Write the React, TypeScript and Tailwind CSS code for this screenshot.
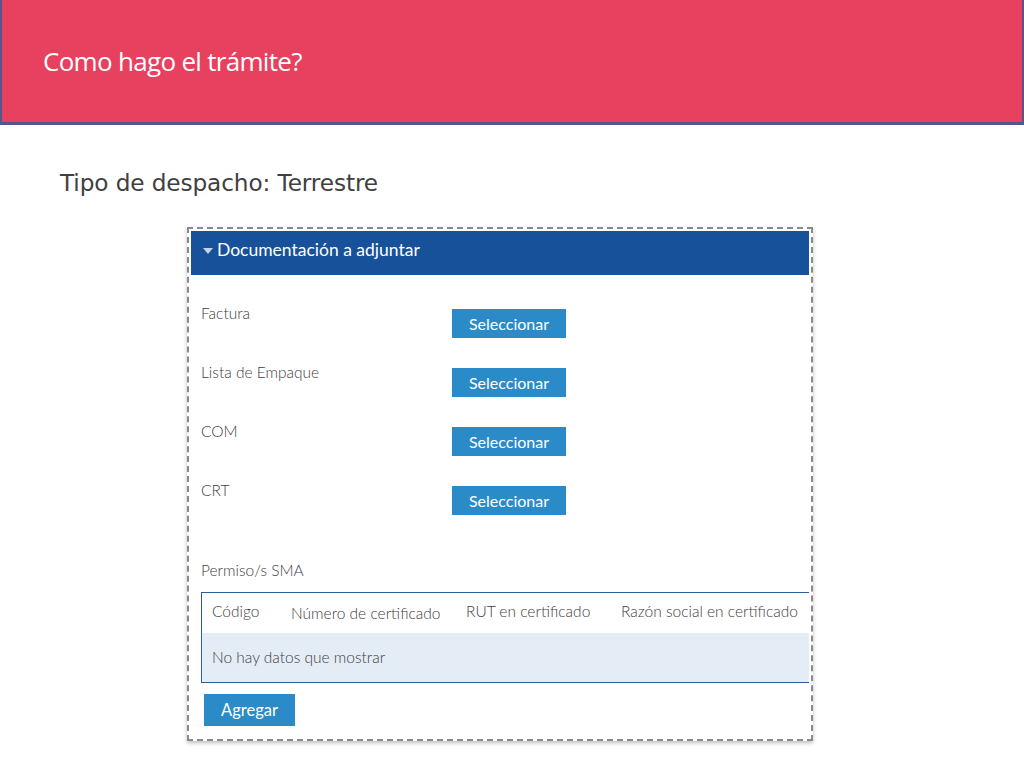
const docs = ['Factura', 'Lista de Empaque', 'COM', 'CRT'];
const columns = [
  { label: 'Código', w: 'w-[89px] pl-[10px]' },
  { label: 'Número de certificado', w: 'w-[175px] pt-[4px]' },
  { label: 'RUT en certificado', w: 'w-[155px]' },
  { label: 'Razón social en certificado', w: 'w-[200px]' },
];

function SelectButton({ children }: { children: React.ReactNode }) {
  return (
    <button
      type="button"
      className="h-[29px] w-[114px] bg-[#2a8bc8] text-[16px] text-white"
    >
      {children}
    </button>
  );
}

export default function App() {
  return (
    <div className="h-[768px] w-[1024px] overflow-hidden bg-white font-['Lato',sans-serif]">
      <header className="flex h-[125px] items-center border-x-2 border-b-[3px] border-[#55578a] bg-[#e8405f] pl-[41px]">
        <h1
          className="font-['Open_Sans',sans-serif] text-[26px] tracking-[-0.7px] text-white"
          style={{ fontStretch: '90%' }}
        >
          Como hago el trámite?
        </h1>
      </header>

      <p className="mt-[42px] pl-[60px] font-['DejaVu_Sans',sans-serif] text-[23.2px] leading-[32px] tracking-[-0.1px] text-[#404040]">
        Tipo de despacho: Terrestre
      </p>

      <div className="ml-[187px] mt-[28px] w-[626px] border-2 border-dashed border-[#8a8a8a] p-[2px] shadow-[0_2px_4px_rgba(0,0,0,0.25)]">
        <div className="flex h-[44px] items-center bg-[#17519a] pl-[12px] pb-[6px] text-[17.5px] text-white">
          <svg width="10" height="7" viewBox="0 0 10 7" className="mr-[4px] mt-[2px]">
            <path d="M0 0 H10 L5 6 Z" fill="#c8d3e4" />
          </svg>
          Documentación a adjuntar
        </div>

        <div className="pl-[10px] pt-[34px] pb-[11px]">
          <div className="flex flex-col gap-[30px]">
            {docs.map((d) => (
              <div key={d} className="flex items-start">
                <span className="w-[251px] -mt-[7px] text-[15.5px] font-light text-[#404040]">{d}</span>
                <SelectButton>Seleccionar</SelectButton>
              </div>
            ))}
          </div>

          <p className="mt-[44px] text-[15.5px] font-light text-[#404040]">Permiso/s SMA</p>

          <div className="mt-[10px] overflow-hidden border-y border-l border-[#2d5ea0]">
            <div className="flex h-[40px] items-center pb-[4px] text-[15.5px] font-light text-[#404040]">
              {columns.map((c) => (
                <span key={c.label} className={`${c.w} shrink-0 whitespace-nowrap`}>
                  {c.label}
                </span>
              ))}
            </div>
            <div className="flex h-[49px] items-center bg-[#e4ecf6] pl-[10px] text-[15.5px] font-light text-[#404040]">
              No hay datos que mostrar
            </div>
          </div>

          <button
            type="button"
            className="mt-[11px] ml-[3px] h-[32px] w-[91px] bg-[#2a8bc8] text-[16.5px] text-white"
          >
            Agregar
          </button>
        </div>
      </div>
    </div>
  );
}
